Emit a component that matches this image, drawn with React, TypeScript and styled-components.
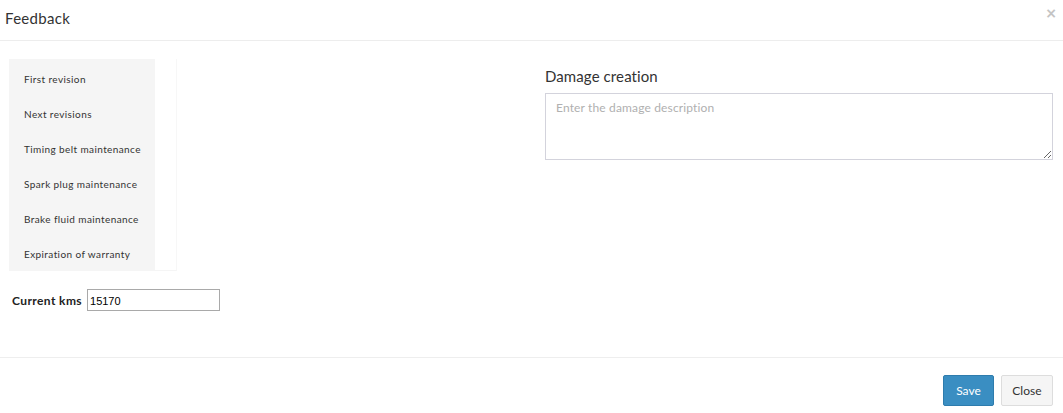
import React from "react";
import styled, { createGlobalStyle } from "styled-components";

const Global = createGlobalStyle`
  html, body { margin: 0; padding: 0; background: #fff; }
  body { font-family: Lato, "Open Sans", sans-serif; color: #333; }
  * { box-sizing: border-box; }
`;

const Modal = styled.div`
  width: 1063px;
  height: 413px;
  display: flex;
  flex-direction: column;
  background: #fff;
`;

const Header = styled.div`
  height: 41px;
  display: flex;
  align-items: center;
  justify-content: space-between;
  padding: 0 6px 5px 5px;
  border-bottom: 1px solid #ededed;
`;

const Title = styled.h3`
  margin: 0;
  font-size: 15px;
  font-weight: 400;
  letter-spacing: 0.3px;
  color: #333;
`;

const CloseX = styled.button`
  border: none;
  background: none;
  padding: 0;
  margin-top: -10px;
  font-family: "DejaVu Sans", sans-serif;
  font-size: 14px;
  font-weight: 700;
  line-height: 1;
  color: #c4c4c4;
  cursor: pointer;
`;

const Body = styled.div`
  display: grid;
  grid-template-columns: 536px 508px;
  padding: 18px 10px 46px 9px;
  border-bottom: 1px solid #eeeeee;
`;

const LeftCol = styled.div`
  display: flex;
  flex-direction: column;
`;

const TabsRow = styled.div`
  display: flex;
  align-items: stretch;
`;

const NavList = styled.ul`
  list-style: none;
  margin: 0;
  padding: 2px 0 0;
  width: 146px;
  background: #f5f5f5;
`;

const NavItem = styled.li`
  height: 35px;
  display: flex;
  align-items: center;
  padding-left: 15px;
  font-size: 10px;
  letter-spacing: 0.4px;
  color: #333;
`;

const Pane = styled.div`
  width: 22px;
  border-right: 1px solid #f7f7f7;
  border-bottom: 1px solid #f5f5f5;
`;

const KmsRow = styled.div`
  display: flex;
  align-items: center;
  gap: 5px;
  margin-top: 18px;
  padding-left: 3px;
`;

const KmsLabel = styled.label`
  font-size: 12px;
  font-weight: 700;
  letter-spacing: 0.4px;
  color: #222;
`;

const KmsInput = styled.input`
  width: 133px;
  height: 22px;
  border: 1px solid #a9a9a9;
  padding: 1px 2px 0;
  font-family: "Liberation Sans", Arial, sans-serif;
  font-size: 11px;
  color: #000;
  outline: none;
`;

const RightCol = styled.div`
  display: flex;
  flex-direction: column;
`;

const SectionTitle = styled.h4`
  margin: 8px 0 8px;
  font-size: 15px;
  font-weight: 400;
  line-height: 18px;
  letter-spacing: 0.1px;
  color: #333;
`;

const TextArea = styled.textarea`
  width: 508px;
  height: 67px;
  border: 1px solid #d3d3dc;
  padding: 6px 10px;
  font-family: Lato, sans-serif;
  font-size: 12px;
  letter-spacing: 0.15px;
  color: #333;
  resize: both;
  outline: none;
  &::placeholder { color: #b0b0b0; }
`;

const Footer = styled.div`
  flex: 1;
  display: flex;
  justify-content: flex-end;
  align-items: flex-start;
  gap: 7px;
  padding: 17px 10px 0 0;
`;

const Button = styled.button<{ $primary?: boolean }>`
  height: 31px;
  padding: 0 ${(p) => (p.$primary ? "12px" : "10.5px")};
  font-family: Lato, sans-serif;
  font-size: 12px;
  border-radius: 2px;
  cursor: pointer;
  border: 1px solid ${(p) => (p.$primary ? "#2e7cad" : "#dddddd")};
  background: ${(p) => (p.$primary ? "#3a8ec2" : "#f5f5f5")};
  color: ${(p) => (p.$primary ? "#fff" : "#333")};
`;

const items = [
  "First revision",
  "Next revisions",
  "Timing belt maintenance",
  "Spark plug maintenance",
  "Brake fluid maintenance",
  "Expiration of warranty",
];

export default function App() {
  return (
    <>
      <Global />
      <Modal>
        <Header>
          <Title>Feedback</Title>
          <CloseX aria-label="Close">×</CloseX>
        </Header>
        <Body>
          <LeftCol>
            <TabsRow>
              <NavList>
                {items.map((t) => (
                  <NavItem key={t}>{t}</NavItem>
                ))}
              </NavList>
              <Pane />
            </TabsRow>
            <KmsRow>
              <KmsLabel>Current kms</KmsLabel>
              <KmsInput defaultValue="15170" />
            </KmsRow>
          </LeftCol>
          <RightCol>
            <SectionTitle>Damage creation</SectionTitle>
            <TextArea placeholder="Enter the damage description" />
          </RightCol>
        </Body>
        <Footer>
          <Button $primary>Save</Button>
          <Button>Close</Button>
        </Footer>
      </Modal>
    </>
  );
}
